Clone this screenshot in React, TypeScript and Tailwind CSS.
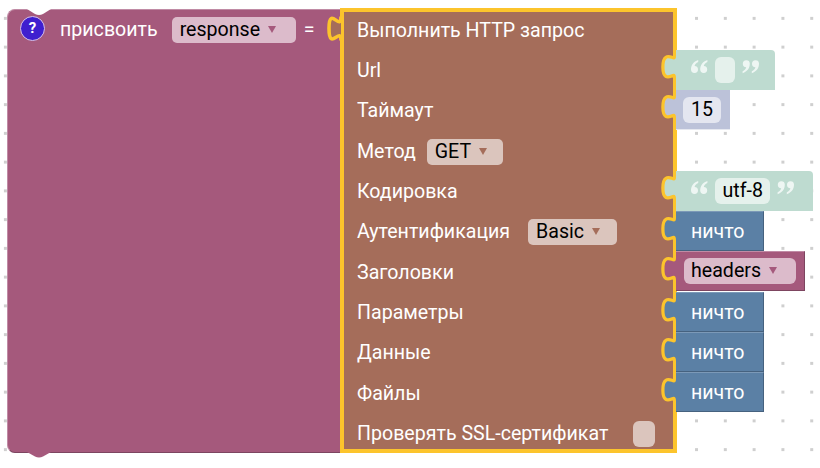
import React from "react";

function Tab({ fill, edge }: { fill: string; edge: string }) {
  const d = "M16 2 c0 10 -11.5 -7 -11.5 11 s11.5 -1 11.5 11";
  return (
    <svg className="absolute left-[-16px] top-[4px]" width="21" height="28" viewBox="0 0 21 28">
      <path d={d} fill="none" stroke={edge} strokeWidth="6.5" />
      <path d={d + " H21 V2 z"} fill={fill} />
    </svg>
  );
}

function Arrow({ color }: { color: string }) {
  return (
    <svg className="ml-[8px] mt-[-1px]" width="8" height="7" viewBox="0 0 8 7">
      <path d="M0 0 H8 L4 7 z" fill={color} />
    </svg>
  );
}

function Row({ children }: { children: React.ReactNode }) {
  return <div className="flex h-[40.3px] items-center pl-[17px] whitespace-nowrap">{children}</div>;
}

function Nothing() {
  return (
    <div className="relative flex h-[40px] w-[88px] items-center border-b border-b-[#46627f] border-t border-t-[#7c99b7] border-r border-r-[#46627f] bg-[#5b80a5] pl-[15px] pt-[2px] text-white">
      <Tab fill="#5b80a5" edge="#fcc42c" />
      ничто
    </div>
  );
}

function Quote({ flip }: { flip?: boolean }) {
  const one = "M7.2 0 C2.4 1.6 0 5 0 9.6 A3.5 3.5 0 1 0 3.6 6 C3.9 4.2 5.2 3 7.2 2 Z";
  return (
    <svg className="mt-[-5px] shrink-0" width="17" height="14" viewBox="0 0 17 14">
      <g transform={flip ? "rotate(180 8.5 6.6)" : undefined} fill="#eef6f3">
        <path d={one} />
        <path d={one} transform="translate(9.2 0)" />
      </g>
    </svg>
  );
}

function Text({ value, width }: { value: string; width: string }) {
  return (
    <div className={`relative flex h-[40px] items-center rounded-tr-sm bg-[#bedbd0] pl-[15px] ${width}`}>
      <Tab fill="#bedbd0" edge="#fcc42c" />
      <Quote />
      <span className="ml-[7px] mr-[7px] flex h-[26px] min-w-[20px] items-center justify-center rounded-[6px] bg-[#e5f1ec] px-[7.5px] text-black">{value}</span>
      <Quote flip />
    </div>
  );
}

export default function App() {
  return (
    <div className="flex h-[468px] w-[820px] items-start overflow-hidden bg-white bg-[radial-gradient(circle,#cfcfcf_1.6px,transparent_1.7px)] bg-[size:28.8px_28.75px] bg-[position:-9px_4px] pl-[7px] pt-[7.5px] text-[19.6px] leading-none font-['Roboto',sans-serif] text-white">
      <div className="relative mt-[1.5px] h-[444px] w-[333px] rounded-l-[8px] border-t border-l border-[#c08ba5] border-b-[#7d4560] border-b bg-[#a5597c]">
        <svg className="absolute left-[19px] top-[-1px]" width="24" height="7" viewBox="0 0 24 7"><path d="M0 0 L8 5 Q12 7 16 5 L24 0 z" fill="#fff" /></svg>
        <svg className="absolute bottom-[-6px] left-[19px]" width="24" height="6" viewBox="0 0 24 6"><path d="M0 0 L8 4.5 Q12 6.5 16 4.5 L24 0 z" fill="#a5597c" /></svg>
        <div className="flex items-center pl-[12px] pt-[7px]">
          <div className="mt-[-3px] flex h-[25px] w-[25px] items-center justify-center rounded-full border border-[#d9c3e8] bg-[#3f1fcf] text-[15px] font-bold">?</div>
          <span className="ml-[15px]">присвоить</span>
          <div className="ml-[14px] flex h-[26px] w-[124px] shrink-0 items-center rounded-[5px] bg-[#dcbbcb] pl-[8px] text-black">
            response
            <Arrow color="#a5597c" />
          </div>
          <span className="ml-[8px]">=</span>
        </div>
      </div>
      <div className="relative h-[445.5px] w-[336.5px] bg-[#a56d5a] pt-[3px] shadow-[inset_0_0_0_4px_#fcc42c]">
        <svg className="absolute left-[-14px] top-[7px]" width="20" height="28" viewBox="0 0 20 28">
          <path d="M15 1.5 c0 16 -12 -12 -12 12 s12 -3 12 12" fill="#a56d5a" stroke="#fcc42c" strokeWidth="3.6" />
        </svg>
        <Row>Выполнить HTTP запрос</Row>
        <Row>Url</Row>
        <Row>Таймаут</Row>
        <Row>
          Метод
          <div className="ml-[11px] flex h-[26px] w-[76px] items-center rounded-[5px] bg-[#dbc5bd] pl-[8px] text-black">GET<Arrow color="#a56d5a" /></div>
        </Row>
        <Row>Кодировка</Row>
        <Row>
          Аутентификация
          <div className="ml-[18px] flex h-[26px] w-[89px] items-center rounded-[5px] bg-[#dbc5bd] pl-[8px] text-black">Basic<Arrow color="#a56d5a" /></div>
        </Row>
        <Row>Заголовки</Row>
        <Row>Параметры</Row>
        <Row>Данные</Row>
        <Row>Файлы</Row>
        <Row>
          Проверять SSL-сертификат
          <div className="ml-[25px] h-[26px] w-[22px] rounded-[6px] bg-[#dbc5bd]"></div>
        </Row>
      </div>
      <div className="ml-[-0.5px] flex flex-col pt-[42.3px]">
        <Text value="" width="w-[99px]" />
        <div className="relative mt-[0.3px] flex h-[40px] w-[54px] items-center border-b border-[#e6e8f0] bg-[#bcc2d9] pl-[7px]">
          <Tab fill="#bcc2d9" edge="#fcc42c" />
          <span className="flex h-[26px] w-[38px] items-center justify-center rounded-[6px] bg-[#e4e6f0] text-black">15</span>
        </div>
        <div className="h-[40.6px]"></div>
        <Text value="utf-8" width="w-[137px]" />
        <div className="mt-[0.3px]"><Nothing /></div>
        <div className="relative mt-[0.3px] flex h-[40px] w-[128.5px] items-center border-t border-t-[#c08ba5] border-r border-b border-r-[#7d4560] border-b-[#7d4560] bg-[#a5597c] pl-[8px]">
          <Tab fill="#a5597c" edge="#fcc42c" />
          <div className="flex h-[26px] w-[112px] items-center rounded-[6px] bg-[#dcbbcb] pl-[7px] text-black">headers<Arrow color="#a5597c" /></div>
        </div>
        <div className="mt-[0.3px]"><Nothing /></div>
        <div className="mt-[0.3px]"><Nothing /></div>
        <div className="mt-[0.3px]"><Nothing /></div>
      </div>
    </div>
  );
}
